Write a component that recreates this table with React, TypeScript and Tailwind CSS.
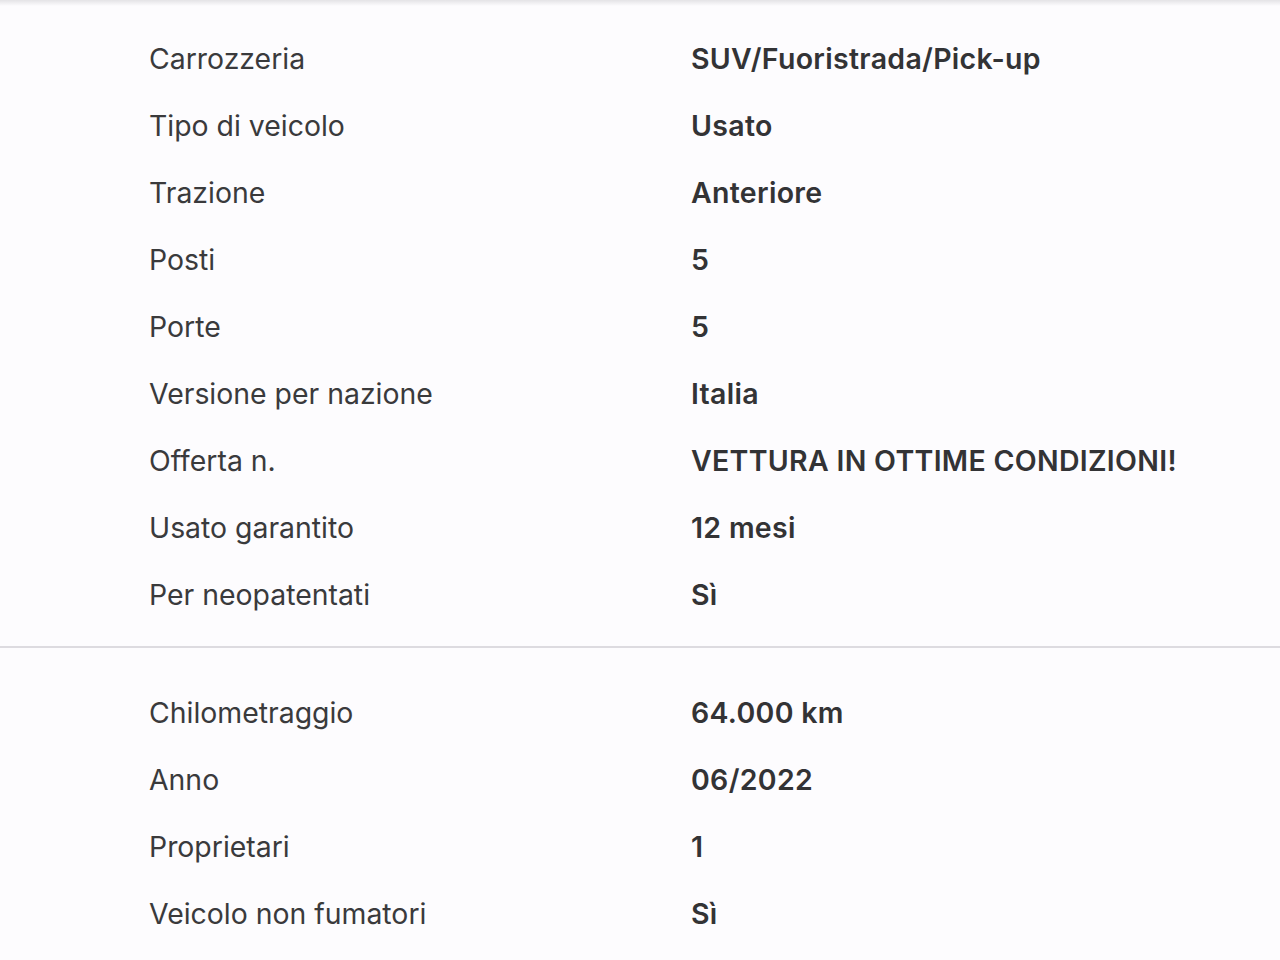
import React from "react";

const section1: [string, string][] = [
  ["Carrozzeria", "SUV/Fuoristrada/Pick-up"],
  ["Tipo di veicolo", "Usato"],
  ["Trazione", "Anteriore"],
  ["Posti", "5"],
  ["Porte", "5"],
  ["Versione per nazione", "Italia"],
  ["Offerta n.", "VETTURA IN OTTIME CONDIZIONI!"],
  ["Usato garantito", "12 mesi"],
  ["Per neopatentati", "Sì"],
];

const section2: [string, string][] = [
  ["Chilometraggio", "64.000 km"],
  ["Anno", "06/2022"],
  ["Proprietari", "1"],
  ["Veicolo non fumatori", "Sì"],
];

function Row({ label, value }: { label: string; value: string }) {
  return (
    <div className="flex h-[67px] items-center">
      <div className="w-[542px] shrink-0 pl-[149px] box-content text-[28.4px] text-[#3a3a3c]">{label}</div>
      <div className="text-[28.5px] font-semibold tracking-[0.3px] text-[#333335]">{value}</div>
    </div>
  );
}

export default function App() {
  return (
    <div
      className="relative h-[960px] w-[1280px] overflow-hidden bg-[#fdfcfe]"
      style={{ fontFamily: "Inter, 'Noto Sans', sans-serif" }}
    >
      <div className="pointer-events-none absolute inset-x-0 top-0 h-[6px] bg-gradient-to-b from-[#e4e3e6] to-transparent" />
      <div className="pt-[26px]">
        {section1.map(([l, v]) => (
          <Row key={l} label={l} value={v} />
        ))}
      </div>
      <div className="mt-[17px] h-[2px] bg-[#dddbe0]" />
      <div className="pt-[32px]">
        {section2.map(([l, v]) => (
          <Row key={l} label={l} value={v} />
        ))}
      </div>
    </div>
  );
}
